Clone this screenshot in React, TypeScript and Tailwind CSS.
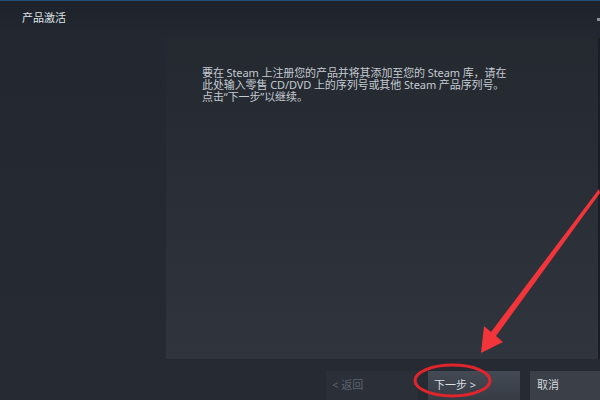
const FONT = '"Noto Sans", "Noto Sans CJK SC", sans-serif'

function Annotation() {
  // red hand-drawn callout over the dialog: arrow + ring around the next button
  return (
    <svg
      className="pointer-events-none absolute inset-0"
      width="600"
      height="400"
      viewBox="0 0 600 400"
      aria-hidden="true"
    >
      <polygon
        points="599,189 600,193 496,336 503,342 481,353 484,326 491,332"
        fill="#f2353a"
      />
      <ellipse cx="452.5" cy="380.5" rx="37.5" ry="15.5" fill="none" stroke="#e1252b" strokeWidth="3" />
    </svg>
  )
}

export default function App() {
  return (
    <div
      className="relative flex h-[400px] w-[600px] flex-col overflow-hidden bg-[#262a32] text-[11px]"
      style={{ fontFamily: FONT }}
    >
      {/* ── TITLE BAR ── */}
      <div className="h-px w-full bg-[#1f4e7a]" />
      <header className="flex h-[37px] shrink-0 bg-gradient-to-b from-[#1e232b] to-[#23272f] pl-[22px] pt-[8px]">
        <span className="leading-[17px] text-[#dde3e8]">产品激活</span>
      </header>

      {/* ── BODY ── */}
      <div className="flex min-h-0 flex-1">
        <aside className="w-[166px] shrink-0 bg-gradient-to-b from-[#23272f] to-[#262a33]" />
        <main className="flex flex-1 flex-col bg-gradient-to-b from-[#24282f] via-[#2a2e36] to-[#30343c] pl-[36px] pt-[29px]">
          <p className="flex flex-col leading-[12px] tracking-[-0.1px] text-[#c3cad1]">
            <span>要在 Steam 上注册您的产品并将其添加至您的 Steam 库，请在</span>
            <span>此处输入零售 CD/DVD 上的序列号或其他 Steam 产品序列号。</span>
            <span>点击“下一步”以继续。</span>
          </p>
        </main>
        <div className="w-[2px] shrink-0 bg-[#1a1d22]" />
      </div>

      {/* ── FOOTER BUTTONS ── */}
      <footer className="flex h-[41px] shrink-0 gap-[10px] bg-[#262a32] pl-[326px] pt-[12px]">
        <button className="flex h-[29px] w-[92px] items-center bg-[#2b2f37] pl-[6px] text-[#5d646d]">
          &lt; 返回
        </button>
        <button className="flex h-[29px] w-[92px] items-center bg-gradient-to-b from-[#444a55] to-[#363b44] pl-[6px] text-[#d9dee3]">
          下一步 &gt;
        </button>
        <button className="flex h-[29px] w-[70px] items-center bg-[#3a3f48] pl-[7px] text-[#d4d9de]">
          取消
        </button>
      </footer>

      <div className="absolute right-0 top-[18px] h-[3px] w-[3px] bg-[#8a9099]" />
      <Annotation />
    </div>
  )
}
